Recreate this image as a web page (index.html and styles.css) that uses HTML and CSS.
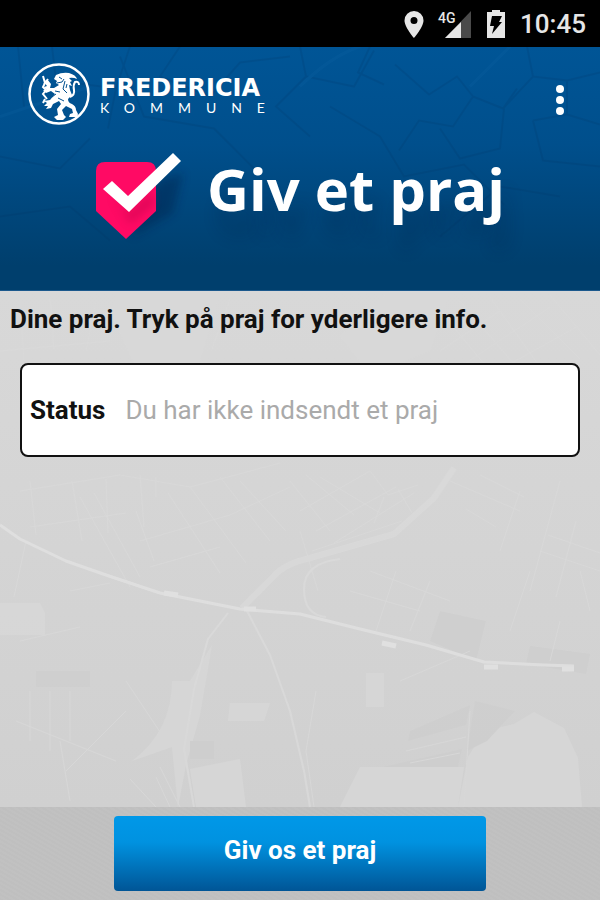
FILE: index.html
```
<!DOCTYPE html>
<html lang="da">
<head>
    <meta charset="UTF-8">
    <meta name="viewport" content="width=device-width, initial-scale=1.0">
    <title>Giv et praj - Fredericia Kommune</title>
    <link rel="stylesheet" href="styles.css">
</head>
<body>
    <div class="statusbar">
        <svg width="20" height="28" viewBox="0 0 20 28" aria-hidden="true">
            <path fill="#e6e6e6" fill-rule="evenodd" d="M10 1a9.500 9.500 0 0 0-9.500 9.500C.5 17 10 28 10 28s9.500-11 9.500-17.500A9.500 9.500 0 0 0 10 1zm0 6a3.500 3.500 0 1 1 0 7 3.500 3.500 0 0 1 0-7z"/>
        </svg>
        <div class="signal">
            <span class="network">4G</span>
            <svg width="28" height="28" viewBox="0 0 28 28" aria-hidden="true">
                <path fill="#4a4a4a" d="M27 1v27H1z"/>
                <path fill="#e6e6e6" d="M17 12v16H1z"/>
            </svg>
        </div>
        <svg width="20" height="28" viewBox="0 0 20 28" aria-hidden="true">
            <path fill="#e6e6e6" d="M6 0h8v2h5v26H1V2h5z"/>
            <path fill="#000" d="M6 6h10l-3 6h3L6 24l2-8H4z"/>
        </svg>
        <time class="clock">10:45</time>
    </div>

    <header class="header">
        <svg class="header-map" viewBox="0 0 600 244" preserveAspectRatio="xMidYMid slice" aria-hidden="true">
            <g fill="none" stroke="#00315f" stroke-width="2">
                <path d="M18 0l6 60M52 0l4 34 60 8 14-42M116 42l-8 40M180 0l-20 30 50 20 30-34 50-6M300 0l6 30 48 10 20-36M306 30l-30 30 34 30"/>
                <path d="M395 18l34 30 28-18 16 20-20 30-34-6-20 30M473 50l30 12 14-20M440 82l20 30 40-10 4-40M503 62l30-32 34 4v34l-34 6M533 30l-6-30M567 34l33-8M567 68l33 10M533 74l10 40 57 6"/>
                <path d="M370 0l-12 26 26 12M330 60l50 30 24 40 60-12 40 40M0 110l60 12 30-30M0 170l70-10 40 34M440 190l60-50 60 10M120 10l24 60 70 12 40 40"/>
            </g>
            <path fill="none" stroke="#1a6dad" stroke-width="3" d="M300 40q30-30 60-40M470 40l40-40M0 70l90-30"/>
        </svg>
        <div class="topline">
            <div class="logo">
                <svg width="62" height="62" viewBox="0 0 62 62" aria-hidden="true">
                    <circle cx="31" cy="31" r="29.500" fill="none" stroke="#fff" stroke-width="2.500"/>
                    <path fill="#fff" d="M28 12q6-3 13-2 7 2 8 6-4-2-8-1l3 3-2 1 2 4-3-1 1 5 2 5-4 4q0 4 4 5 4 2 4 6l2 4-1 3h-8l1-3 3-1-1-4-6-3-4 4 2 5 2 2-3 3h-6l-3-3 4-2-1-6 4-5-2-3-6 3-2 4-5 1 2-3-4 0 3-3-3-2 6-1 5-6-4-3-5 2-3-3h4l-3-3 3-1-3-4 3 0 0-3 4 5-1 4 4 0 5-3-3-2 1-2-3-2z"/>
                    <path fill="none" stroke="#fff" stroke-width="2" d="M42 34q5-2 4-7t1-8q4-1 4 3M15 13l2 7-2 4 4 4M20 16l-4 5M18 27l-3 4 4 5M17 36l-2 4"/>
                    <path fill="none" stroke="#00508f" d="M31 14l3 2M29 20l5-1 2-3M37 18l-2 8 4 4M27 28l5 1M30 35l6 3M39 21l-1 4M24 34l4-3"/>
                </svg>
                <div class="logo-text">
                    <span class="logo-name">FREDERICIA</span>
                    <span class="logo-sub">KOMMUNE</span>
                </div>
            </div>
            <button class="menu" type="button" aria-label="Menu">
                <svg width="8" height="32" viewBox="0 0 8 32" fill="#fff">
                    <circle cx="4" cy="5" r="4"/>
                    <circle cx="4" cy="16" r="4"/>
                    <circle cx="4" cy="27" r="4"/>
                </svg>
            </button>
        </div>
        <div class="brand">
            <svg class="badge" width="88" height="88" viewBox="0 0 88 88" aria-hidden="true">
                <defs>
                    <filter id="soft" x="-50%" y="-50%" width="200%" height="200%">
                        <feGaussianBlur stdDeviation="5"/>
                    </filter>
                </defs>
                <path fill="#001f45" opacity=".4" filter="url(#soft)" d="M62 28l26-8-10 40-42 24z"/>
                <path fill="#ff0a64" d="M10 9h42q9 0 9 9v40L31 86 1 58V18q0-9 9-9z"/>
                <path fill="#a3003f" opacity=".4" filter="url(#soft)" d="M16 40l18 22 24-23v12L35 70z"/>
                <path fill="#fff" d="M8 36l9-8 16 15L78 0l8 8-52 51z"/>
            </svg>
            <h1>Giv et praj</h1>
        </div>
    </header>

    <main class="content">
        <svg class="map" viewBox="0 0 600 516" preserveAspectRatio="xMidYMin slice" aria-hidden="true">
            <g fill="#d9d9d9">
                <path d="M0 312h40l5 10v22H0zM484 440l30-7 20-12 30 16 14 30 4 49H458l10-50zM190 478l50-10 6 48h-50zM230 412h40l-6 18h-36zM366 382h18v34h-18zM340 516l20-40h104l-6 40zM110 20l10-20h100l-20 70-40 60zM340 45l50-45h60l-20 60-60 24z"/>
                <path d="M190 390l22-36-12 70-14 50-8 42-6-60-40 14q40-30 40-80z"/>
            </g>
            <g fill="#cecece">
                <path d="M36 380h54v16H36zM440 320l46 10-10 40-46-20zM475 410l40 10-28 30-20 10zM410 440l60-26-4 20-58 16zM190 450h24v18h-24zM530 355l60 8-4 20-60-10zM382 476l80-18-4 18z"/>
            </g>
            <!-- side streets -->
            <g fill="none" stroke="#dadada">
                <path d="M30 190l6 54M72 190l10 60M106 188l2 54M140 184l4 52M156 186v20M20 200l100-16 70 12 90-24M30 236l96-14M80 206l50 90M94 202l46 84M136 220l18 50M168 202l52 80M190 196l56 76M220 186l50 64M240 190l46 50M140 250l90-26 60-28M150 276l70-20"/>
                <path d="M290 190l40 50M306 184l48 40M320 186l60 36M300 220l70-40M316 240l80-44M334 252l80-50M370 180l18 24 30-10M384 206l-10 26M398 198l14 24M312 260l90-30M450 190l70 30M466 218l30 18M480 184l44 22M520 200l-20 60M540 260l60 20M548 244l52 18M560 190l-30 110M576 230l-20 76"/>
                <path d="M440 20l50 60M460 10l60 70M490 6l50 70M520 8l60 60M440 60l60-40M460 76l90-60M490 84l90-50M550 4l50 60M20 10l4 60M50 8l4 50M86 60l10-50M150 10l-14 50M190 20l-16 44M230 8l-18 50M0 60l110-10"/>
                <path d="M20 350l60-14M14 306l12-56M70 300l40-8M30 400l0 50M50 400v60M70 400v50M16 430l100 40M126 390l40 60M126 420l-60 60M130 488l26 28M156 486l14 30M160 476l20 40M60 450l10 60M0 330l30-6M376 340l20-60M410 340l20-50M400 390l70-30M406 460l60-14M410 472l50-10M470 420l-6 96M510 340l20-60M560 330l-10 40M580 280l10 40M316 400l-10 60 8 56M350 300l70 20M370 280l80 30M300 240l18 60"/>
            </g>
            <!-- main roads -->
            <g fill="none" stroke="#dcdcdc" stroke-linejoin="round">
                <path stroke-width="2" d="M246 318l24 46 20 56 14 60 6 36M228 322l-20 26-14 50-10 60 10 58M340 268q-36 4-36 30t22 28"/>
                <path stroke-width="6" stroke="#dbdbdb" d="M242 317l32-32q10-12 36-18l84-24 40-36 20-30"/>
                <path stroke="#e4e4e4" stroke-width="3" d="M0 234l20 14 46 22 40 14 54 18 80 16 60 5 60 15 66 16 58 17 60 3 30 1"/>
                <path stroke="#e6e6e6" stroke-width="5" d="M164 302l14 2M244 318h12M382 352l14 3M484 376h14M562 378h12"/>
            </g>
        </svg>
        <h2>Dine praj. Tryk på praj for yderligere info.</h2>
        <section class="card">
            <span class="card-label">Status</span>
            <span class="card-text">Du har ikke indsendt et praj</span>
        </section>
    </main>

    <footer class="footer">
        <button class="submit" type="button">Giv os et praj</button>
    </footer>
</body>
</html>
```
FILE: styles.css
```
* {
    margin: 0;
    padding: 0;
    box-sizing: border-box;
}

body {
    min-height: 100vh;
    display: flex;
    flex-direction: column;
    background: #d3d3d3;
    font-family: Roboto, sans-serif;
    color: #111;
}

/* Status bar */
.statusbar {
    display: flex;
    justify-content: flex-end;
    align-items: center;
    gap: 14px;
    padding: 8px 14px 7px;
    background: #000;
    color: #e6e6e6;
}

.statusbar svg {
    display: block;
}

.signal {
    position: relative;
    padding-left: 6px;
}

.network {
    position: absolute;
    top: 0;
    left: 0;
    font-size: 14px;
    line-height: 16px;
    font-weight: 500;
}

.clock {
    font-size: 26px;
    line-height: 32px;
    font-weight: 500;
}

/* Header */
.header {
    position: relative;
    padding: 16px 28px 49px;
    background: linear-gradient(#005596, #004f8c 40%, #003f6d 90%);
    border-bottom: 1px solid #1b588c;
}

.header-map {
    position: absolute;
    top: 0;
    left: 0;
    width: 100%;
    height: 100%;
    opacity: 0.15;
}

.topline,
.brand {
    position: relative;
    display: flex;
}

.topline {
    justify-content: space-between;
    align-items: center;
}

.logo {
    display: flex;
    align-items: center;
    gap: 10px;
    color: #fff;
}

.logo-text {
    display: flex;
    flex-direction: column;
    padding-top: 4px;
}

.logo-name {
    font-family: "DejaVu Sans", sans-serif;
    font-size: 24px;
    line-height: 24px;
    font-weight: 700;
}

.logo-sub {
    font-family: Lato, sans-serif;
    font-size: 14px;
    line-height: 16px;
    letter-spacing: 15px;
}

.menu {
    display: flex;
    justify-content: center;
    width: 24px;
    padding-top: 12px;
    border: none;
    background: none;
    cursor: pointer;
}

.brand {
    justify-content: center;
    align-items: flex-start;
    gap: 24px;
    margin-top: 28px;
}

.badge {
    overflow: visible;
}

h1 {
    padding-top: 4px;
    font-family: "Open Sans", sans-serif;
    font-size: 58px;
    line-height: 64px;
    font-weight: 700;
    color: #fff;
    text-shadow: 8px 24px 16px rgba(0, 25, 55, 0.2);
}

/* Content */
.content {
    position: relative;
    flex: 1;
    padding: 12px 20px;
    background: linear-gradient(#d8d8d8, #d0d0d0);
}

.map {
    position: absolute;
    top: 0;
    left: 0;
    width: 100%;
    height: 100%;
    opacity: 0.7;
}

h2 {
    position: relative;
    margin: 0 -10px;
    font-size: 26px;
    line-height: 32px;
    font-weight: 700;
}

.card {
    position: relative;
    display: flex;
    align-items: center;
    gap: 20px;
    min-height: 94px;
    margin-top: 28px;
    padding: 8px;
    border: 2px solid #111;
    border-radius: 8px;
    background: #fff;
    font-size: 26px;
    line-height: 32px;
}

.card-label {
    font-weight: 700;
}

.card-text {
    color: #aaa;
}

/* Bottom bar */
.footer {
    padding: 9px 0;
    text-align: center;
    background: repeating-linear-gradient(30deg, #bfbfbf 0 2px, #c1c1c1 2px 4px);
}

.submit {
    width: 62%;
    height: 75px;
    padding-bottom: 8px;
    border: none;
    border-radius: 4px;
    background: linear-gradient(#0098e8, #0092e0 35%, #005596);
    color: #fff;
    font-family: inherit;
    font-size: 26px;
    line-height: 32px;
    font-weight: 700;
    cursor: pointer;
}
```
